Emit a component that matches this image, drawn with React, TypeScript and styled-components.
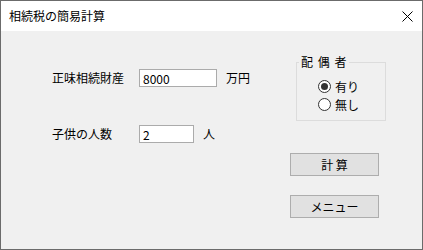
import { createGlobalStyle, styled } from "styled-components";

const GlobalStyle = createGlobalStyle`
  html, body {
    margin: 0;
    padding: 0;
    background: #ffffff;
  }
  * {
    box-sizing: border-box;
  }
`;

const font = `"Noto Sans CJK JP", "Noto Sans", sans-serif`;

const Window = styled.div`
  width: 423px;
  height: 250px;
  border: 1px solid #6b6b6b;
  background: #f0f0f0;
  display: flex;
  flex-direction: column;
  font-family: ${font};
  font-size: 12px;
  color: #000;
`;

const TitleBar = styled.div`
  height: 30px;
  background: #ffffff;
  display: flex;
  align-items: center;
  justify-content: space-between;
  padding: 0 9px 0 8px;
`;

const Title = styled.span`
  font-size: 12px;
  line-height: 14px;
  color: #000;
`;

const Body = styled.div`
  flex: 1;
  display: flex;
  align-items: flex-start;
  padding-left: 51px;
`;

const LeftCol = styled.div`
  width: 238px;
  padding-top: 38px;
  display: flex;
  flex-direction: column;
  gap: 38px;
`;

const Row = styled.div`
  display: flex;
  align-items: center;
  height: 18px;
`;

const Label = styled.span`
  width: 87px;
  line-height: 14px;
`;

const Field = styled.input<{ $w: number }>`
  width: ${(p) => p.$w}px;
  height: 18px;
  border: 1px solid #ababab;
  background: #ffffff;
  padding: 0 3px;
  margin: 0;
  font-family: ${font};
  font-size: 12px;
  color: #000;
  outline: none;
`;

const Unit = styled.span`
  margin-left: 9px;
  line-height: 14px;
`;

const RightCol = styled.div`
  width: 89px;
  padding-top: 25px;
  display: flex;
  flex-direction: column;
`;

const Group = styled.fieldset`
  margin: 0 0 0 6px;
  width: 90px;
  height: 65px;
  border: 1px solid #dcdcdc;
  padding: 0 0 0 2px;
`;

const Legend = styled.legend`
  padding: 0 2px;
  line-height: 12px;
  font-size: 12px;
  white-space: pre;
  letter-spacing: 1px;
`;

const RadioList = styled.div`
  padding: 9px 0 0 19px;
  display: flex;
  flex-direction: column;
`;

const RadioRow = styled.label`
  display: flex;
  align-items: center;
  height: 18px;
  gap: 4px;
`;

const Circle = styled.span<{ $on?: boolean }>`
  width: 13px;
  height: 13px;
  border-radius: 50%;
  border: 1px solid #333333;
  background: #ffffff;
  display: flex;
  align-items: center;
  justify-content: center;
  &::after {
    content: "";
    width: 7px;
    height: 7px;
    border-radius: 50%;
    background: #333333;
    display: ${(p) => (p.$on ? "block" : "none")};
  }
`;

const Button = styled.button<{ $top: number }>`
  margin-top: ${(p) => p.$top}px;
  width: 89px;
  height: 23px;
  background: #e1e1e1;
  border: 1px solid #adadad;
  font-family: ${font};
  font-size: 12px;
  color: #000;
  padding: 0;
  white-space: pre;
`;

function CloseIcon() {
  return (
    <svg width="11" height="11" viewBox="0 0 11 11">
      <path d="M0.5 0.5 L10.5 10.5 M10.5 0.5 L0.5 10.5" stroke="#000" strokeWidth="1" />
    </svg>
  );
}

export default function App() {
  return (
    <>
      <GlobalStyle />
      <Window>
        <TitleBar>
          <Title>相続税の簡易計算</Title>
          <CloseIcon />
        </TitleBar>
        <Body>
          <LeftCol>
            <Row>
              <Label>正味相続財産</Label>
              <Field $w={78} defaultValue="8000" />
              <Unit>万円</Unit>
            </Row>
            <Row>
              <Label>子供の人数</Label>
              <Field $w={55} defaultValue="2" />
              <Unit>人</Unit>
            </Row>
          </LeftCol>
          <RightCol>
            <Group>
              <Legend>配 偶 者</Legend>
              <RadioList>
                <RadioRow>
                  <Circle $on />
                  有り
                </RadioRow>
                <RadioRow>
                  <Circle />
                  無し
                </RadioRow>
              </RadioList>
            </Group>
            <Button $top={32}>計 算</Button>
            <Button $top={19}>メニュー</Button>
          </RightCol>
        </Body>
      </Window>
    </>
  );
}
